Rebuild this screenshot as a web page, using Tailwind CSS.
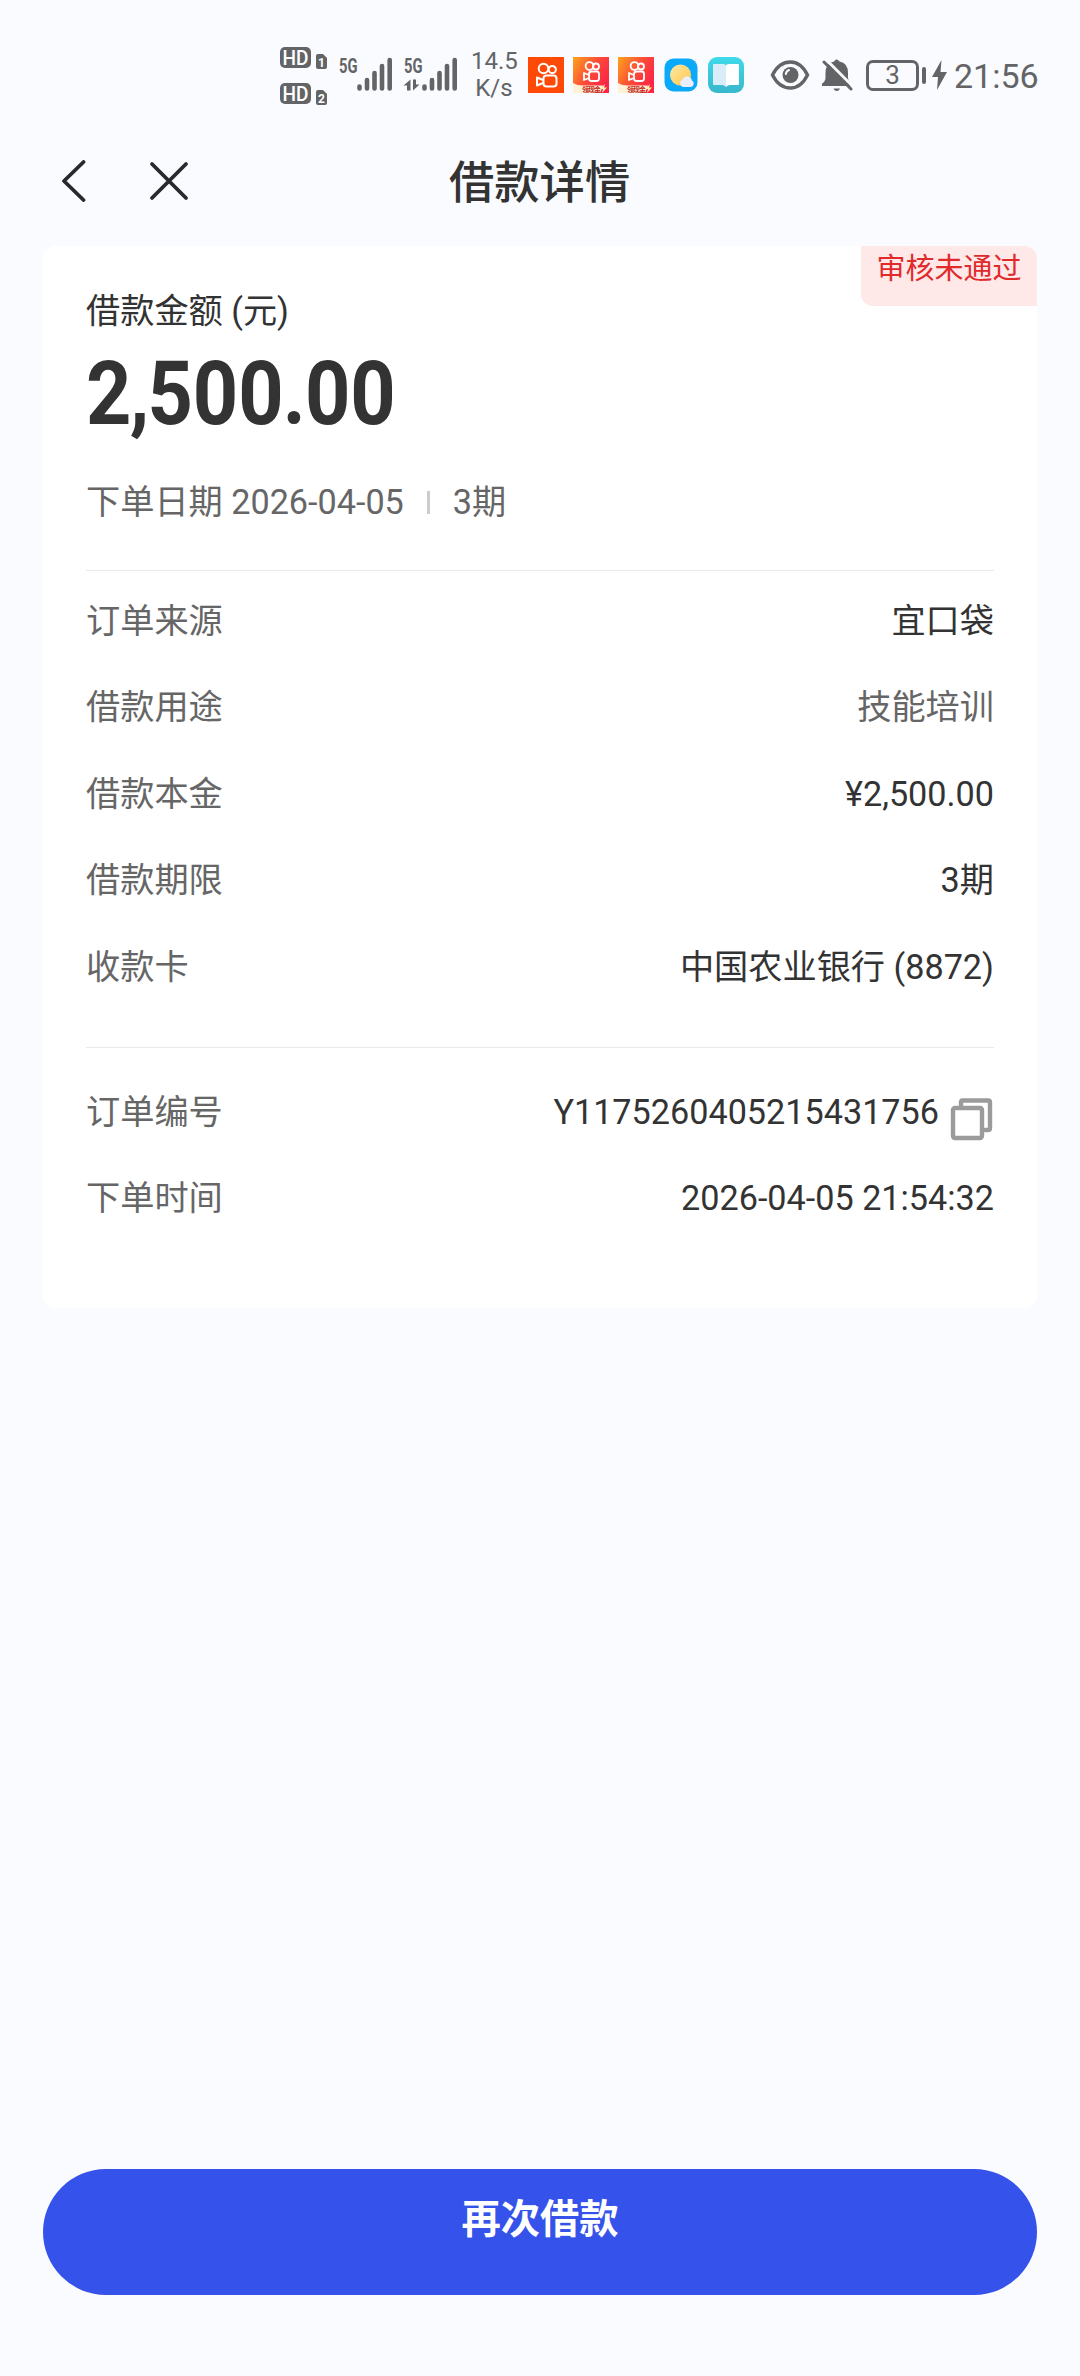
<!DOCTYPE html>
<html lang="zh-CN">
<head>
  <meta charset="UTF-8">
  <meta name="viewport" content="width=device-width, initial-scale=1.0">
  <title>借款详情</title>
  <script src="https://cdn.jsdelivr.net/npm/@tailwindcss/browser@4"></script>
</head>
<body class="bg-[#fafbff] font-[Roboto,'Noto_Sans_CJK_SC',sans-serif] text-[#333]">
  <div class="flex h-[2376px] w-[1080px] flex-col overflow-hidden">

    <!-- status bar -->
    <div class="flex h-[150px] shrink-0 items-center pl-[280px] text-[#636466]">
      <svg class="h-[90px] w-[180px] shrink-0" viewBox="280 30 180 90" fill="#636466">
        <rect x="280" y="47" width="31" height="21" rx="5"/>
        <rect x="280" y="83" width="31" height="21" rx="5"/>
        <g font-family="Roboto" font-size="20" font-weight="500" fill="#fff" text-anchor="middle">
          <text x="295.500" y="64.500" textLength="26" lengthAdjust="spacingAndGlyphs">HD</text>
          <text x="295.500" y="100.500" textLength="26" lengthAdjust="spacingAndGlyphs">HD</text>
        </g>
        <path d="M318 54h5l4 4v9q0 2-2 2h-7q-2 0-2-2V56q0-2 2-2zM318 90h5l4 4v9q0 2-2 2h-7q-2 0-2-2V92q0-2 2-2z"/>
        <g font-family="Roboto" font-size="12" font-weight="700" fill="#fff" text-anchor="middle">
          <text x="321.500" y="66.500">1</text>
          <text x="321.500" y="102.500">2</text>
        </g>
        <g font-family="Roboto" font-size="20" font-weight="700">
          <text x="339" y="72.500" textLength="18.500" lengthAdjust="spacingAndGlyphs">5G</text>
          <text x="404" y="72.500" textLength="18.500" lengthAdjust="spacingAndGlyphs">5G</text>
        </g>
        <g stroke="#636466" stroke-width="4.600" stroke-linecap="round">
          <path d="M359.500 86.500v2M367 80v8.500M374.500 73v15.500M382 66v22.500M389.700 60v28.500"/>
          <path d="M424.500 86.500v2M432 80v8.500M439.500 73v15.500M447 66v22.500M454.700 60v28.500"/>
        </g>
        <path d="M410.500 79.500v11H407v-5h-3.500zM413 79.500v11l6.500-6H416v-5z"/>
      </svg>

      <div class="ml-[11px] w-[46px] text-center text-[24px] leading-[27px]"><p>14.5</p><p>K/s</p></div>

      <div class="ml-[11px] flex items-center">
        <svg class="h-9 w-9" viewBox="0 0 36 36" fill="none">
          <path fill="#ff4906" d="M0 0h36v36H0z"/>
          <g stroke="#fff" stroke-width="2">
            <circle cx="15.500" cy="11.500" r="4.800"/><circle cx="24.300" cy="12.500" r="3.600"/>
            <rect x="15.500" y="18.500" width="13" height="11" rx="3"/><path stroke-linejoin="round" d="M15 23l-6-2.500v8l6-2.500"/>
          </g>
        </svg>
        <svg class="ml-[9px] h-9 w-9" viewBox="0 0 36 36" fill="none">
          <defs>
            <linearGradient id="ks" x1="0" y1="0" x2="1" y2="0.600"><stop stop-color="#ffa31c"/><stop offset=".55" stop-color="#fc4b38"/><stop offset="1" stop-color="#fc2547"/></linearGradient>
          </defs>
          <path fill="url(#ks)" d="M0 0h36v36H0z"/>
          <path fill="#fff1d8" d="M0 26q4 2.500 10 2.500h20L27 36H0z"/>
          <g stroke="#fff" stroke-width="1.800">
            <circle cx="16.500" cy="9" r="3.900"/><circle cx="23" cy="9.500" r="3"/>
            <rect x="16" y="14.500" width="10" height="9.500" rx="2.500"/><path stroke-linejoin="round" d="M16 18l-5-2v7l5-2"/>
          </g>
          <text x="9" y="34.500" font-family="Noto Sans CJK SC" font-size="7" font-weight="700" fill="#c22a1c" textLength="19">领现金</text>
          <path fill="#fff3a8" d="M32 27l-5 5h3l-1 4 5-5.500h-3z"/>
        </svg>
        <svg class="ml-[9px] h-9 w-9" viewBox="0 0 36 36" fill="none">
          <path fill="url(#ks)" d="M0 0h36v36H0z"/>
          <path fill="#fff1d8" d="M0 26q4 2.500 10 2.500h20L27 36H0z"/>
          <g stroke="#fff" stroke-width="1.800">
            <circle cx="16.500" cy="9" r="3.900"/><circle cx="23" cy="9.500" r="3"/>
            <rect x="16" y="14.500" width="10" height="9.500" rx="2.500"/><path stroke-linejoin="round" d="M16 18l-5-2v7l5-2"/>
          </g>
          <text x="9" y="34.500" font-family="Noto Sans CJK SC" font-size="7" font-weight="700" fill="#c22a1c" textLength="19">领现金</text>
          <path fill="#fff3a8" d="M32 27l-5 5h3l-1 4 5-5.500h-3z"/>
        </svg>
        <svg class="ml-[10px] h-[34px] w-[34px]" viewBox="0 0 34 34">
          <defs>
            <linearGradient id="sun" x1="0" y1="0" x2="1" y2="1"><stop stop-color="#ffe9a8"/><stop offset="1" stop-color="#ffc64a"/></linearGradient>
          </defs>
          <rect x=".5" y=".5" width="33" height="33" rx="9" fill="#0aa9fa"/>
          <circle cx="16.500" cy="17" r="10.500" fill="url(#sun)"/>
          <path fill="#e9efff" d="M19 29a4 4 0 0 1-.5-7.500 5 5 0 0 1 9.500 1 3.500 3.500 0 0 1-1 6.500z"/>
        </svg>
        <svg class="ml-[10px] h-9 w-9" viewBox="0 0 36 36">
          <defs>
            <linearGradient id="book" x1="0" y1="0" x2="0" y2="1"><stop stop-color="#3fd9ea"/><stop offset="1" stop-color="#38b7cb"/></linearGradient>
          </defs>
          <rect width="36" height="36" rx="9" fill="url(#book)"/>
          <path fill="#d9edf8" d="M5 8q0-1 1-1h9q3 0 3 2v21q-2-2-4-2H6q-1 0-1-1z"/>
          <path fill="#fff" d="M31 8q0-1-1-1h-9q-3 0-3 2v21q2-2 4-2h8q1 0 1-1z"/>
        </svg>
      </div>

      <svg class="ml-[26px] h-9 w-10 shrink-0" viewBox="0 0 40 36" fill="none">
        <path stroke="#636466" stroke-width="3.400" d="M2.500 18C7 9 13 5 20.500 5S33 9 37.500 18C33 27 28 31 20.500 31S7 27 2.500 18z"/>
        <circle cx="20.500" cy="18" r="8" fill="#636466"/>
        <path stroke="#fafbff" stroke-width="2" stroke-linecap="round" d="M15.800 17q.5-3 3.200-4"/>
      </svg>
      <svg class="ml-[11px] h-9 w-8 shrink-0" viewBox="0 0 32 36">
        <path fill="#636466" d="M1 29v-2.500q3.500-2 3.500-6V16Q4.500 6 13 4.500q2.500-4 5.500 0Q27 6 27 16v4.500q0 4 2.500 6V29zM12.500 31.500h6.500q-1 2.500-3.200 2.500t-3.300-2.500z"/>
        <path stroke="#fafbff" stroke-width="3" d="M5 2.500l28 28"/>
        <path stroke="#636466" stroke-width="3" stroke-linecap="round" d="M3 5l27 27"/>
      </svg>
      <div class="ml-[13px] flex h-[31px] w-[53px] shrink-0 items-center justify-center rounded-[7px] border-[3px] border-[#636466] text-[26px] leading-none">3</div>
      <div class="ml-[3px] h-[17px] w-1 rounded-full bg-[#636466]"></div>
      <svg class="ml-[6px] h-[30px] w-[15px] shrink-0" viewBox="0 0 15 30" fill="#636466"><path d="M9.500 0L0 17h6L5 30l10-18H8.500z"/></svg>
      <div class="ml-[7px] pt-[2px] text-[34px] font-[450] leading-none">21:56</div>
    </div>

    <!-- title bar -->
    <div class="flex h-[96px] shrink-0 items-start px-[60px] pt-[10px]">
      <svg class="h-[42px] w-[28px]" viewBox="0 0 28 42" fill="none" stroke="#28292b" stroke-width="3.800" stroke-linecap="round" stroke-linejoin="round"><path d="M23.500 2L4 21l19.500 19"/></svg>
      <svg class="ml-[60px] h-[42px] w-[42px]" viewBox="0 0 42 42" fill="none" stroke="#28292b" stroke-width="3.800" stroke-linecap="round"><path d="M4 4l34 34M38 4L4 38"/></svg>
      <h1 class="mt-[2px] ml-[259px] text-[45.300px] font-medium leading-[44px]">借款详情</h1>
    </div>

    <!-- detail card -->
    <div class="relative mx-[43px] h-[1062px] shrink-0 rounded-xl bg-white px-[43px] text-[34.200px] leading-[50px]">
      <div class="absolute top-0 right-0 h-[60px] w-[176px] rounded-tr-xl rounded-bl-xl bg-[#ffe8e8] text-center text-[29px] leading-[47px] text-[#e02a2c]">审核未通过</div>
      <div class="pt-[40px]">借款金额 (元)</div>
      <div class="h-[110px] w-fit origin-left scale-x-[0.89] pt-[3px] text-[89px] font-bold leading-[110px]">2<span class="-mx-[2px]">,</span>500<span class="-mx-[1px]">.</span>00</div>
      <div class="mt-[31px] flex items-center text-[#666]">
        <span>下单日期 2026-04-05</span>
        <span class="ml-[23px] h-[23px] w-[3px] bg-[#ccc]"></span>
        <span class="ml-[23px]">3期</span>
      </div>

      <div class="mt-[43px] flex flex-col gap-[36.400px] border-t border-[#eaeaea] pt-[25px]">
        <div class="flex justify-between"><span class="text-[#666]">订单来源</span><span>宜口袋</span></div>
        <div class="flex justify-between text-[#666]"><span>借款用途</span><span>技能培训</span></div>
        <div class="flex justify-between"><span class="text-[#666]">借款本金</span><span>¥2,500.00</span></div>
        <div class="flex justify-between"><span class="text-[#666]">借款期限</span><span>3期</span></div>
        <div class="flex justify-between"><span class="text-[#666]">收款卡</span><span>中国农业银行 (8872)</span></div>
      </div>

      <div class="mt-[55px] flex flex-col gap-[36.400px] border-t border-[#eaeaea] pt-[39px]">
        <div class="flex h-[50px]">
          <span class="flex-1 text-[#666]">订单编号</span>
          <span>Y1175260405215431756</span>
          <svg class="mt-[11px] ml-[11px] h-[44px] w-[44px] shrink-0" viewBox="0 0 44 44" fill="none" stroke="#9b9b9b" stroke-width="4.400" stroke-linejoin="round" stroke-linecap="round">
            <rect x="3" y="10" width="29" height="30" rx="2"/>
            <path d="M11 8V4q0-1.500 1.500-1.500H38q2 0 2 2V30q0 2-2 2h-3"/>
          </svg>
        </div>
        <div class="flex justify-between"><span class="text-[#666]">下单时间</span><span>2026-04-05 21:54:32</span></div>
      </div>
    </div>

    <!-- bottom button -->
    <button class="mx-[43px] mt-auto mb-[81px] h-[126px] shrink-0 rounded-full bg-[#3552ea] pb-[23px] text-[39.300px] font-bold text-white">再次借款</button>
  </div>
</body>
</html>
